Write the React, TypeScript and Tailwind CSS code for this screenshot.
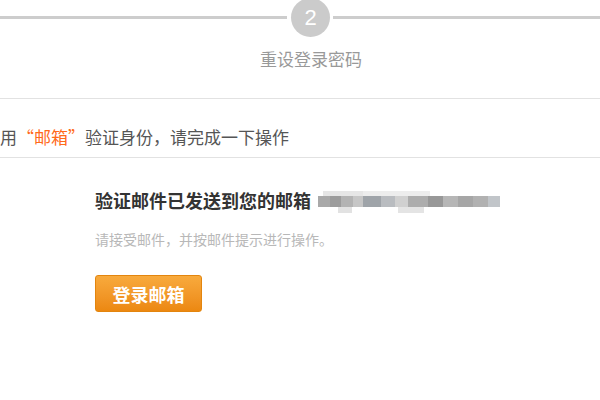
import React from 'react';

const CJK = { fontFamily: '"Microsoft YaHei", "Noto Sans CJK SC", "Noto Sans", sans-serif' };

// pixelated (masked) email address
const blocks: [number, number, number, number, string][] = [
  [5, 0, 40, 5, '#e6e6e6'],
  [45, 0, 67, 5, '#ededed'],
  [0, 5, 12, 11, '#a9a9a9'],
  [12, 5, 11, 11, '#9c9c9c'],
  [23, 5, 12, 11, '#b3b3b3'],
  [35, 5, 10, 11, '#c6c6c6'],
  [45, 5, 18, 11, '#9fa4a9'],
  [63, 5, 14, 11, '#b9bcc0'],
  [77, 5, 13, 11, '#d0d0d0'],
  [90, 5, 20, 11, '#adadad'],
  [110, 5, 15, 11, '#989898'],
  [125, 5, 15, 11, '#b6b6b6'],
  [140, 5, 15, 11, '#a6a6a6'],
  [155, 5, 15, 11, '#b1b1b1'],
  [170, 5, 12, 11, '#c1c5c9'],
  [20, 16, 14, 6, '#e2e2e2'],
  [80, 16, 26, 6, '#e4e4e4'],
];

const MaskedEmail = () => (
  <svg width="182" height="22" viewBox="0 0 182 22" className="ml-[7px] mt-[3px]">
    {blocks.map(([x, y, w, h, c], i) => (
      <rect key={i} x={x} y={y} width={w} height={h} fill={c} />
    ))}
  </svg>
);

const App: React.FC = () => {
  return (
    <div className="w-[600px] h-[400px] overflow-hidden bg-white" style={CJK}>
      {/* Step header */}
      <div className="flex flex-col h-[99px] border-b border-[#e2e2e2]">
        <div className="flex items-center -mt-[2px] h-[39px]">
          <div className="w-[287px] h-[3px] bg-[#cdcdcd]"></div>
          <div className="ml-[4px] size-[39px] rounded-full bg-[#cbcbcb] flex items-center justify-center text-white text-[22px] font-light leading-none" style={{ fontFamily: '"Liberation Sans", Arial, sans-serif' }}>
            2
          </div>
          <div className="ml-[3px] flex-1 h-[3px] bg-[#cdcdcd]"></div>
        </div>
        <div className="pl-[22px] mt-[10px] text-center text-[17px] leading-[24px] text-[#999]">重设登录密码</div>
      </div>

      {/* Verification method */}
      <div className="h-[59px] border-b border-[#e2e2e2] pt-[26px]">
        <div className="text-[17px] leading-[24px] text-[#555] whitespace-nowrap">
          用<span className="text-[#ff6a1a]">“邮箱”</span>验证身份，请完成一下操作
        </div>
      </div>

      {/* Content */}
      <div className="pl-[95px] pt-[29px]">
        <div className="flex items-center">
          <span className="text-[18px] leading-[26px] font-bold text-[#333]">验证邮件已发送到您的邮箱</span>
          <MaskedEmail />
        </div>
        <div className="mt-[16px] text-[14px] leading-[20px] text-[#b8b8b8]">请接受邮件，并按邮件提示进行操作。</div>
        <button className="mt-[26px] w-[107px] h-[37px] rounded-[3px] border border-[#e3850e] bg-gradient-to-b from-[#f8aa3c] to-[#ec8810] text-white text-[18px] font-bold leading-none">
          登录邮箱
        </button>
      </div>
    </div>
  );
};

export default App;
